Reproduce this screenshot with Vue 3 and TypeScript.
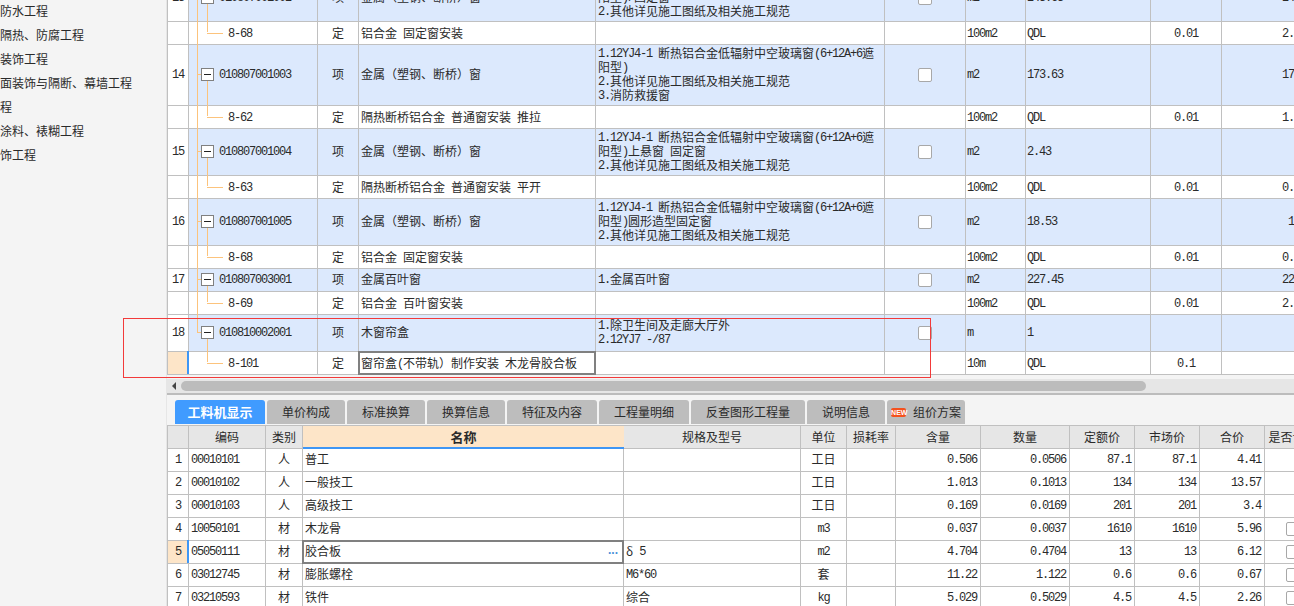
<script setup lang="ts">
interface UpperRow {
  n?: string
  code: string
  type: string
  name: string
  desc?: string[]
  unit: string
  qty: string
  coef?: string
  last?: string
  height: string
  parent: boolean
  end?: boolean
  tail?: boolean
  selected?: boolean
}

const win = '1.12YJ4-1 断热铝合金低辐射中空玻璃窗(6+12A+6遮'
const other = '2.其他详见施工图纸及相关施工规范'

const upperRows: UpperRow[] = [
  { n: '13', code: '010807001002', type: '项', name: '金属（塑钢、断桥）窗', desc: [win, '阳型)/固定窗', other], unit: 'm2', qty: '243.63', last: '243.63', height: 'h47', parent: true },
  { code: '8-68', type: '定', name: '铝合金 固定窗安装', unit: '100m2', qty: 'QDL', coef: '0.01', last: '2.4363', height: 'h23', parent: false },
  { n: '14', code: '010807001003', type: '项', name: '金属（塑钢、断桥）窗', desc: [win, '阳型)', other, '3.消防救援窗'], unit: 'm2', qty: '173.63', last: '173.63', height: 'h61', parent: true },
  { code: '8-62', type: '定', name: '隔热断桥铝合金 普通窗安装 推拉', unit: '100m2', qty: 'QDL', coef: '0.01', last: '1.7363', height: 'h23', parent: false },
  { n: '15', code: '010807001004', type: '项', name: '金属（塑钢、断桥）窗', desc: [win, '阳型)上悬窗 固定窗', other], unit: 'm2', qty: '2.43', last: '2.43', height: 'h47', parent: true },
  { code: '8-63', type: '定', name: '隔热断桥铝合金 普通窗安装 平开', unit: '100m2', qty: 'QDL', coef: '0.01', last: '0.0243', height: 'h23', parent: false },
  { n: '16', code: '010807001005', type: '项', name: '金属（塑钢、断桥）窗', desc: [win, '阳型)圆形造型固定窗', other], unit: 'm2', qty: '18.53', last: '18.53', height: 'h47', parent: true },
  { code: '8-68', type: '定', name: '铝合金 固定窗安装', unit: '100m2', qty: 'QDL', coef: '0.01', last: '0.1853', height: 'h23', parent: false },
  { n: '17', code: '010807003001', type: '项', name: '金属百叶窗', desc: ['1.金属百叶窗'], unit: 'm2', qty: '227.45', last: '227.45', height: 'h23', parent: true },
  { code: '8-69', type: '定', name: '铝合金 百叶窗安装', unit: '100m2', qty: 'QDL', coef: '0.01', last: '2.2745', height: 'h23', parent: false },
  { n: '18', code: '010810002001', type: '项', name: '木窗帘盒', desc: ['1.除卫生间及走廊大厅外', '2.12YJ7 -/87'], unit: 'm', qty: '1', last: '1', height: 'h37', parent: true, end: true },
  { code: '8-101', type: '定', name: '窗帘盒(不带轨）制作安装 木龙骨胶合板', unit: '10m', qty: 'QDL', coef: '0.1', height: 'h23', parent: false, tail: true, selected: true },
]

const tabs = ['工料机显示', '单价构成', '标准换算', '换算信息', '特征及内容', '工程量明细', '反查图形工程量', '说明信息']

const lowerHead = ['', '编码', '类别', '名称', '规格及型号', '单位', '损耗率', '含量', '数量', '定额价', '市场价', '合价', '是否计价']

const lowerRows = [
  { code: '00010101', type: '人', name: '普工', spec: '', unit: '工日', content: '0.506', amount: '0.0506', quota: '87.1', market: '87.1', total: '4.41', check: false },
  { code: '00010102', type: '人', name: '一般技工', spec: '', unit: '工日', content: '1.013', amount: '0.1013', quota: '134', market: '134', total: '13.57', check: false },
  { code: '00010103', type: '人', name: '高级技工', spec: '', unit: '工日', content: '0.169', amount: '0.0169', quota: '201', market: '201', total: '3.4', check: false },
  { code: '10050101', type: '材', name: '木龙骨', spec: '', unit: 'm3', content: '0.037', amount: '0.0037', quota: '1610', market: '1610', total: '5.96', check: true },
  { code: '05050111', type: '材', name: '胶合板', spec: 'δ 5', unit: 'm2', content: '4.704', amount: '0.4704', quota: '13', market: '13', total: '6.12', check: true },
  { code: '03012745', type: '材', name: '膨胀螺栓', spec: 'M6*60', unit: '套', content: '11.22', amount: '1.122', quota: '0.6', market: '0.6', total: '0.67', check: true },
  { code: '03210593', type: '材', name: '铁件', spec: '综合', unit: 'kg', content: '5.029', amount: '0.5029', quota: '4.5', market: '4.5', total: '2.26', check: true },
]

const sideItems = ['防水工程', '隔热、防腐工程', '装饰工程', '面装饰与隔断、幕墙工程', '程', '涂料、裱糊工程', '饰工程']

const upperCols = [22, 129, 41, 237, 289, 81, 60, 125, 71, 100]
const lowerCols = [22, 77, 37, 321, 177, 46, 49, 85, 89, 65, 65, 65, 56]

function runs(text: string) {
  return (text.match(/[\x20-\x7e]+|[^\x20-\x7e]+/g) ?? []).map((t) => ({
    t,
    lat: /^[\x20-\x7e]/.test(t),
  }))
}
</script>

<template>
  <div class="page">
    <aside class="side">
      <div v-for="item in sideItems" :key="item" class="side-item">{{ item }}</div>
    </aside>

    <main class="main">
      <div class="upper">
        <table class="grid upper-table">
          <colgroup><col v-for="(w, i) in upperCols" :key="i" :width="w" /></colgroup>
          <tbody>
            <tr v-for="(r, i) in upperRows" :key="i" :class="[r.height, { blue: r.parent }]">
              <td class="no" :class="{ active: r.selected }"><span class="lat">{{ r.n }}</span></td>
              <td class="tree" :class="{ stripe: r.selected }">
                <i v-if="!r.tail" class="spine" :class="{ end: r.end }"></i>
                <template v-if="r.parent">
                  <i class="branch"></i>
                  <i class="stem-down"></i>
                  <i class="box"><b></b></i>
                  <span class="code lat">{{ r.code }}</span>
                </template>
                <template v-else>
                  <i class="stem-up"></i>
                  <i class="twig"></i>
                  <span class="subcode lat">{{ r.code }}</span>
                </template>
              </td>
              <td class="center">{{ r.type }}</td>
              <td class="left name-cell">
                <span v-for="(p, k) in runs(r.name)" :key="k" :class="{ lat: p.lat }">{{ p.t }}</span>
                <i v-if="r.selected" class="cursor"></i>
              </td>
              <td class="left desc">
                <div v-for="(line, l) in r.desc" :key="l" class="line">
                  <span v-for="(p, k) in runs(line)" :key="k" :class="{ lat: p.lat }">{{ p.t }}</span>
                </div>
              </td>
              <td class="center"><i v-if="r.parent" class="check"></i></td>
              <td class="left"><span class="lat">{{ r.unit }}</span></td>
              <td class="left"><span class="lat">{{ r.qty }}</span></td>
              <td class="center"><span class="lat">{{ r.coef }}</span></td>
              <td class="right"><span class="lat">{{ r.last }}</span></td>
            </tr>
          </tbody>
        </table>
      </div>

      <div class="hscroll">
        <i class="arrow"></i>
        <div class="thumb"></div>
      </div>

      <div class="lower">
        <nav class="tabs">
          <div v-for="(t, i) in tabs" :key="t" class="tab" :class="{ on: i === 0 }">{{ t }}</div>
          <div class="tab new-tab"><span class="new">NEW</span>组价方案</div>
        </nav>

        <table class="grid lower-table">
          <colgroup><col v-for="(w, i) in lowerCols" :key="i" :width="w" /></colgroup>
          <thead>
            <tr>
              <th v-for="(h, i) in lowerHead" :key="i" :class="{ picked: i === 3 }">{{ h }}</th>
            </tr>
          </thead>
          <tbody>
            <tr v-for="(r, i) in lowerRows" :key="r.code" class="h23">
              <td class="no" :class="{ active: i === 4, strong: i === 4 }"><span class="lat">{{ i + 1 }}</span></td>
              <td class="name-cell" :class="{ stripe: i === 4 }"><span class="lat">{{ r.code }}</span></td>
              <td class="center">{{ r.type }}</td>
              <td class="left name-cell">
                {{ r.name }}
                <template v-if="i === 4">
                  <i class="cursor"></i>
                  <span class="dots">...</span>
                </template>
              </td>
              <td class="left spec">
                <span v-for="(p, k) in runs(r.spec)" :key="k" :class="{ lat: p.lat }">{{ p.t }}</span>
              </td>
              <td class="center">
                <span v-for="(p, k) in runs(r.unit)" :key="k" :class="{ lat: p.lat }">{{ p.t }}</span>
              </td>
              <td></td>
              <td class="right"><span class="lat">{{ r.content }}</span></td>
              <td class="right"><span class="lat">{{ r.amount }}</span></td>
              <td class="right"><span class="lat">{{ r.quota }}</span></td>
              <td class="right"><span class="lat">{{ r.market }}</span></td>
              <td class="right"><span class="lat">{{ r.total }}</span></td>
              <td class="center"><i v-if="r.check" class="check"></i></td>
            </tr>
          </tbody>
        </table>
      </div>
    </main>

    <div class="mark"></div>
  </div>
</template>

<style>
html,
body {
  margin: 0;
  overflow: hidden;
  background: #fff;
}
</style>

<style scoped>
.page {
  position: relative;
  display: flex;
  width: 1294px;
  height: 606px;
  overflow: hidden;
  font-family: "Noto Sans CJK SC", "Liberation Sans", sans-serif;
  font-size: 12px;
  color: #2a2a2a;
}
.side {
  box-sizing: border-box;
  flex: 0 0 167px;
  background: #f4f4f4;
  border-right: 1px solid #e6e6e6;
}
.side-item {
  height: 24px;
  line-height: 22px;
  white-space: nowrap;
}
.main {
  flex: 1;
  min-width: 0;
  height: 606px;
  overflow: hidden;
  background: #f4f4f4;
}
.upper {
  height: 375px;
  overflow: hidden;
  background: #fff;
}
.grid {
  table-layout: fixed;
  border-collapse: separate;
  border-spacing: 0;
  background: #fff;
}
.upper-table {
  width: 1155px;
  margin-top: -25px;
}
.lower-table {
  width: 1154px;
  margin-top: 1px;
}
.grid td,
.grid th {
  box-sizing: border-box;
  position: relative;
  padding: 0;
  border-right: 1px solid #c0c0c0;
  border-bottom: 1px solid #c0c0c0;
  line-height: 14px;
  white-space: nowrap;
  overflow: visible;
  font-weight: normal;
}
.grid td:first-child,
.grid th:first-child {
  border-left: 1px solid #c0c0c0;
}
.line {
  height: 14px;
}
.h23 td { height: 23px; }
.h37 td { height: 37px; }
.h47 td { height: 47px; }
.h61 td { height: 61px; }
.blue td {
  background: #dce9fd;
  padding-bottom: 2px;
}
.blue td.no {
  background: #fff;
}
.lower-table td {
  padding-bottom: 2px;
}
.no {
  text-align: center;
}
.grid td.active {
  background: #fde5c8;
}
.strong {
  font-weight: bold;
}
.stripe::before {
  content: "";
  position: absolute;
  left: -2px;
  top: -1px;
  bottom: 0;
  width: 2px;
  background: #3e96f5;
}
.center { text-align: center; }
.left { padding-left: 1px !important; }
.right {
  text-align: right;
  padding-right: 3px !important;
}
.name-cell { padding-left: 2px !important; }
.desc { padding-left: 2px !important; }
.spec { padding-left: 2px !important; }
.lat {
  font-family: "Liberation Mono", monospace;
  font-size: 12px;
  letter-spacing: -1.2px;
  white-space: pre;
  vertical-align: 1px;
}
.tree i {
  position: absolute;
  display: block;
}
.spine {
  left: 8px;
  top: -1px;
  bottom: -1px;
  width: 1px;
  background: #fcc37c;
}
.spine.end {
  bottom: 50%;
}
.branch {
  left: 8px;
  top: 50%;
  width: 5px;
  height: 1px;
  margin-top: -1px;
  background: #fcc37c;
}
.stem-down {
  left: 18px;
  top: 50%;
  bottom: -1px;
  width: 1px;
  background: #fcc37c;
}
.stem-up {
  left: 18px;
  top: -1px;
  height: 50%;
  width: 1px;
  background: #fcc37c;
}
.twig {
  left: 18px;
  top: 50%;
  width: 16px;
  height: 1px;
  background: #fcc37c;
}
.box {
  left: 12px;
  top: 50%;
  box-sizing: border-box;
  width: 13px;
  height: 13px;
  margin-top: -7px;
  border: 1px solid #808080;
  background: #fff;
}
.box b {
  position: absolute;
  left: 2px;
  top: 5px;
  width: 7px;
  height: 1px;
  background: #222;
}
.code { margin-left: 30px; }
.subcode { margin-left: 39px; }
.check {
  display: inline-block;
  box-sizing: border-box;
  width: 14px;
  height: 14px;
  vertical-align: middle;
  border: 1px solid #a8a8a8;
  border-radius: 2px;
  background: #fff;
}
.cursor {
  position: absolute;
  inset: -1px;
  border: 2px solid #808080;
  pointer-events: none;
}
.dots {
  position: absolute;
  right: 5px;
  top: 2px;
  color: #4a90d9;
  font-family: "Liberation Sans", sans-serif;
  font-size: 12px;
  font-weight: bold;
  letter-spacing: 0;
}
.hscroll {
  display: flex;
  align-items: center;
  height: 14px;
  margin-top: 4px;
  padding-left: 5px;
  background: #e6e6e6;
  border-bottom: 2px solid #bcbcbc;
}
.arrow {
  display: block;
  width: 0;
  height: 0;
  margin-right: 5px;
  border-top: 4px solid transparent;
  border-bottom: 4px solid transparent;
  border-right: 4px solid #444;
}
.thumb {
  width: 965px;
  height: 10px;
  border-radius: 5px;
  background: #bcbcbc;
}
.tabs {
  display: flex;
  gap: 2px;
  padding: 5px 0 0 8px;
}
.tab {
  box-sizing: border-box;
  height: 24px;
  padding: 0 15px;
  line-height: 24px;
  border-radius: 3px 3px 0 0;
  background: #bdbdbd;
  white-space: nowrap;
}
.tab.on {
  width: 90px;
  padding: 0;
  background: #409bff;
  color: #fff;
  font-size: 13px;
  font-weight: bold;
  text-align: center;
}
.new-tab {
  display: flex;
  align-items: center;
  width: 78px;
  padding: 0 0 0 4px;
}
.new {
  flex: none;
  width: 15px;
  height: 9px;
  margin-right: 7px;
  border-radius: 2px;
  background: #f4511e;
  color: #fff;
  font-family: "Liberation Sans", sans-serif;
  font-size: 7px;
  font-weight: bold;
  line-height: 9px;
  text-align: center;
}
.lower-table th {
  height: 24px;
  border-top: 1px solid #c0c0c0;
  background: #e6e6e6;
  text-align: center;
  overflow: hidden;
}
.lower-table th.picked {
  background: #fde5c8;
  font-size: 13px;
  font-weight: bold;
  border-right: 0;
  border-bottom: 2px solid #3e96f5;
}
.mark {
  position: absolute;
  left: 123px;
  top: 318px;
  width: 808px;
  height: 60px;
  box-sizing: border-box;
  border: 1px solid #f23a3a;
  pointer-events: none;
}
</style>
